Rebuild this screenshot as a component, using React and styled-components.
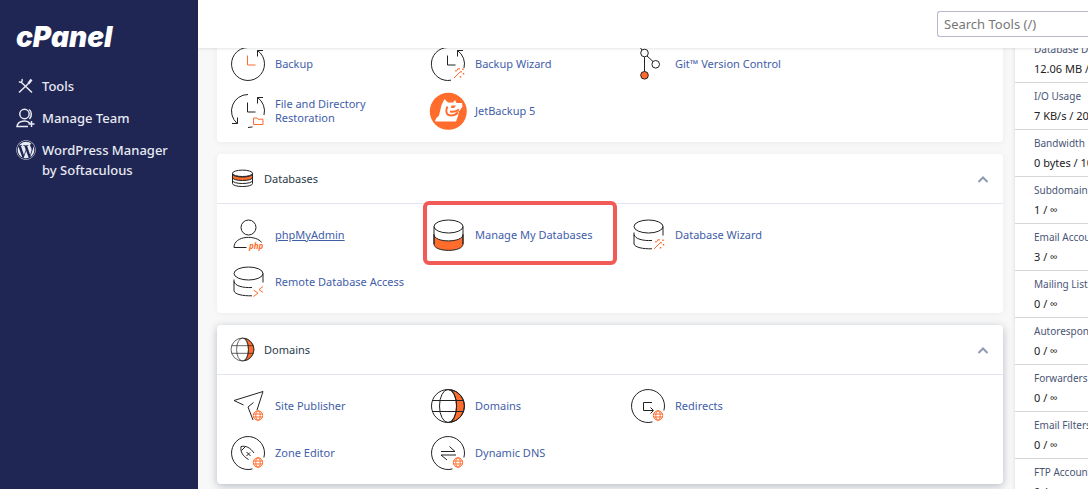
import React from 'react';
import styled, { createGlobalStyle, css } from 'styled-components';
import { FaWordpress } from 'react-icons/fa';

const ORANGE = '#ff6c2c';
const INK = '#222';

const GlobalStyle = createGlobalStyle`
  *, *::before, *::after { box-sizing: border-box; }
  body {
    margin: 0;
    background: #f8f8f8;
    color: #293a4a;
    font-family: "Noto Sans", "Open Sans", sans-serif;
    font-size: 11px;
  }
`;

const Shell = styled.div`
  display: flex;
  height: 100vh;
  overflow: hidden;
`;

const Sidebar = styled.aside`
  flex: 0 0 198px;
  padding: 20px 16px;
  background: #1f2654;
  color: #e8eaf2;
`;

const Logo = styled.a`
  display: block;
  margin-bottom: 22px;
  color: #fff;
  font: italic 900 28px/34px Inter, sans-serif;
  text-decoration: none;
`;

const Nav = styled.nav`
  display: flex;
  flex-direction: column;
  gap: 12px;
`;

const NavLink = styled.a`
  display: flex;
  align-items: flex-start;
  gap: 6px;
  color: inherit;
  font: 500 13px/20px "Noto Sans", sans-serif;
  text-decoration: none;

  svg { flex: none; width: 20px; height: 20px; }
`;

const Page = styled.div`
  flex: 1;
  min-width: 0;
  display: flex;
  flex-direction: column;
`;

const TopBar = styled.header`
  position: relative;
  z-index: 1;
  flex: 0 0 48px;
  display: flex;
  align-items: center;
  justify-content: flex-end;
  background: #fff;
  box-shadow: 0 1px 3px rgba(0, 0, 0, 0.1);
`;

const Search = styled.input`
  width: 151px;
  height: 26px;
  padding: 0 6px;
  border: 1px solid #b5b9cb;
  border-right: 0;
  border-radius: 3px 0 0 3px;
  background: #fff;
  color: #333;
  font: 13px "Noto Sans", sans-serif;

  &::placeholder { color: #777; opacity: 1; }
`;

const Scroller = styled.div`
  flex: 1;
  min-height: 0;
  overflow: hidden;
`;

const Columns = styled.div`
  display: grid;
  grid-template-columns: minmax(0, 1fr) 73px;
  gap: 12px;
  margin-top: -15px;
  padding-left: 19px;
`;

const Panels = styled.main`
  display: flex;
  flex-direction: column;
  gap: 12px;
`;

const PanelBox = styled.section`
  border-radius: 4px;
  background: #fff;
  box-shadow: ${(p) => (p.$raised
    ? '0 2px 8px rgba(31, 45, 75, 0.3)'
    : '0 1px 6px rgba(31, 45, 75, 0.06)')};
`;

const PanelHeader = styled.header`
  display: flex;
  align-items: center;
  gap: 9px;
  height: 50px;
  padding: 0 13px;
  border-bottom: 1px solid #e3e5ee;

  > svg { flex: none; width: 25px; height: 25px; }
`;

const PanelTitle = styled.h2`
  flex: 1;
  margin: 0;
  font-size: 11px;
  font-weight: 400;
`;

const Collapse = styled.button`
  display: flex;
  padding: 0;
  border: 0;
  background: none;
  color: #8f9bb3;
`;

const Tools = styled.div`
  display: grid;
  grid-template-columns: repeat(auto-fill, 200px);
  gap: 11px 0;
  padding: 13px;
`;

const Tool = styled.a`
  position: relative;
  display: flex;
  align-items: center;
  gap: 9px;
  height: 36px;
  color: #3f5ea8;
  line-height: 14px;
  text-decoration: ${(p) => (p.$underlined ? 'underline' : 'none')};

  svg { flex: none; width: 36px; height: 36px; overflow: visible; }
  span { max-width: 140px; }

  ${(p) => p.$marked && css`
    &::after {
      content: "";
      position: absolute;
      inset: -16px 13px -12px -7px;
      border: 4px solid #f15b57;
      border-radius: 6px;
    }
  `}
`;

const Stats = styled.dl`
  margin: 0;
  padding-top: 3px;
  background: #fff;
  box-shadow: 0 0 4px rgba(31, 45, 75, 0.15);
  overflow: hidden;
  white-space: nowrap;
`;

const Stat = styled.div`
  height: 47px;
  padding: 3px 0 0 19px;
  border-bottom: 1px solid #d5d6d9;
`;

const StatName = styled.dt`
  color: #4a5575;
  font-size: 10px;
  line-height: 20px;
`;

const StatValue = styled.dd`
  margin: 0;
  color: #222;
  line-height: 20px;
`;

function Icon({ size = 36, children }) {
  return (
    <svg viewBox={`0 0 ${size} ${size}`} fill="none" stroke={INK} strokeWidth="1" aria-hidden="true">
      {children}
    </svg>
  );
}

const Wand = () => (
  <g stroke={ORANGE}>
    <path d="M24 32l6-6" />
    <path d="M26 24v1.500M29 22v1.500M33 22.500v1.500M31 25v1.500M33.500 27v1.500M30.500 30v1.500M27 23.500h1" strokeWidth="1.500" />
  </g>
);

const MiniGlobe = () => (
  <g stroke={ORANGE}>
    <circle cx="28" cy="27.500" r="4.700" fill="#fff" />
    <ellipse cx="28" cy="27.500" rx="2.200" ry="4.700" />
    <path d="M23.500 26h9M23.500 29h9" />
  </g>
);

const Globe = () => (
  <Icon>
    <path d="M21 1.800A16.500 16.500 0 0 1 21 34.200C28.500 28 28.500 8 21 1.800z" fill={ORANGE} />
    <circle cx="18" cy="18" r="16.500" />
    <ellipse cx="18" cy="18" rx="8.500" ry="16.500" />
    <path d="M2.500 12.500h31M2.500 23.500h31" />
  </Icon>
);

const OpenRing = () => <path d="M33.900 22.500A16.500 16.500 0 1 0 22.500 33.900" />;

const icons = {
  backup: (
    <Icon>
      <path d="M18 1.500A16.500 16.500 0 1 0 27.500 4.500M33 4.500h-5.500v6" />
      <path d="M17.500 9.500v9.500h8" stroke={ORANGE} />
    </Icon>
  ),
  backupWizard: (
    <Icon>
      <path d="M18 1.500A16.500 16.500 0 1 0 21 34.200M34 22A16.500 16.500 0 0 0 27.500 4.500M33 4.500h-5.500v6M17.500 9.500v9.500h8" />
      <Wand />
    </Icon>
  ),
  git: (
    <Icon>
      <path d="M9 0l3 4M17 10l6 5.500M14.500 11v14.500" />
      <circle cx="14.500" cy="7" r="3.800" />
      <circle cx="25.700" cy="18.300" r="3.800" />
      <circle cx="14.500" cy="29.300" r="3.800" fill={ORANGE} />
    </Icon>
  ),
  restore: (
    <Icon>
      <path d="M18 1.500A16.500 16.500 0 0 0 7 30.300M2 30.500h5.500v-6M18 34.500l4.500-.6M34 22A16.500 16.500 0 0 0 27.500 4.500M33 4.500h-5.500v6M17.500 9.500v9.500h8" />
      <path d="M23.500 25h3.500l1 1.200h5v5.300h-9.500z" stroke={ORANGE} />
    </Icon>
  ),
  jetbackup: (
    <Icon>
      <circle cx="18.300" cy="18.300" r="18.500" fill={ORANGE} stroke="none" />
      <path d="M11.500 12L14.500 6l3.500 3.500h5L25 7l1.500 3H32l.5 3.500-3 4.500-5.500 1.500 5-.5-1 4-2 5.500H5l1-3 3-3z" fill="#fff" stroke="none" />
      <path d="M21.500 12.500h4.500l-2 2.500h-3z" fill={ORANGE} stroke="none" />
      <path d="M17.500 13.500c-2.500 5-1 9 3.500 9 2.500 0 5-1 7-3M20 18.500c4 .8 7-.5 9-2" stroke={ORANGE} strokeWidth="1.800" />
    </Icon>
  ),
  databasesGroup: (
    <Icon size={25}>
      <path d="M2.500 8v3.500c0 4 20 4 20 0V8c0 4-20 4-20 0z" fill={ORANGE} />
      <ellipse cx="12.500" cy="7.300" rx="10" ry="3.200" />
      <path d="M2.500 7.500v10c0 4 20 4 20 0v-10M2.500 14.500c0 4 20 4 20 0" />
    </Icon>
  ),
  php: (
    <Icon>
      <circle cx="18.500" cy="10.500" r="7.500" />
      <path d="M16.500 30.500H4C4 18 27 18 31.500 25.500" />
      <text x="19" y="31.500" fill={ORANGE} stroke="none" fontFamily="Open Sans, sans-serif" fontSize="8" fontWeight="700" fontStyle="italic">php</text>
    </Icon>
  ),
  database: (
    <Icon>
      <path d="M4 17.500v9.500c0 8.500 29 8.500 29 0v-9.500c0 8.500-29 8.500-29 0z" fill={ORANGE} />
      <ellipse cx="18.500" cy="9.500" rx="14.500" ry="6.500" />
      <path d="M4 9.500V27M33 9.500V27" />
    </Icon>
  ),
  databaseWizard: (
    <Icon>
      <ellipse cx="18.500" cy="9.500" rx="14.500" ry="6.500" />
      <path d="M33 9.500v9M4 15.500V27c1 3.500 9 5 18 4.800M4 17.500c1 4.500 9 6.500 18 6" />
      <Wand />
    </Icon>
  ),
  remoteDatabase: (
    <Icon>
      <ellipse cx="18.500" cy="9.500" rx="14.500" ry="6.500" />
      <path d="M33 9.500v9M4 15.500V27c1 3.500 9 5 18 4.800M4 17.500c1 4.500 9 6.500 18 6" />
      <path d="M23.500 26l4.500 3.200-4.500 3.300M33 22.500l-4 3 4 3" stroke={ORANGE} />
    </Icon>
  ),
  globe: <Globe />,
  publisher: (
    <Icon>
      <path d="M13.500 17L4 12.500 33 3.500 27 22M23.500 14.500L18 19l5 13" />
      <MiniGlobe />
    </Icon>
  ),
  redirects: (
    <Icon>
      <OpenRing />
      <path d="M22 14.500H13.500v8H23M20.500 19.500l3 3-3 3" />
      <MiniGlobe />
    </Icon>
  ),
  zone: (
    <Icon>
      <OpenRing />
      <path d="M11 11.500c5-1 9 1 13 6.500M11 11.500c-.8 5 1.500 9.500 7.500 13M11.500 15.500l4.500-4.500M16.500 17l4 4M20 17.500l-3.500 3.500" />
      <MiniGlobe />
    </Icon>
  ),
  dns: (
    <Icon>
      <OpenRing />
      <path d="M11 16.500h14l-5.500-5M26 20H11l6 5" />
      <MiniGlobe />
    </Icon>
  ),
};

const groups = [
  {
    tools: [
      { icon: 'backup', label: 'Backup' },
      { icon: 'backupWizard', label: 'Backup Wizard' },
      { icon: 'git', label: 'Git™ Version Control' },
      { icon: 'restore', label: 'File and Directory Restoration' },
      { icon: 'jetbackup', label: 'JetBackup 5' },
    ],
  },
  {
    title: 'Databases',
    icon: 'databasesGroup',
    tools: [
      { icon: 'php', label: 'phpMyAdmin', underlined: true },
      { icon: 'database', label: 'Manage My Databases', marked: true },
      { icon: 'databaseWizard', label: 'Database Wizard' },
      { icon: 'remoteDatabase', label: 'Remote Database Access' },
    ],
  },
  {
    title: 'Domains',
    icon: 'globe',
    raised: true,
    tools: [
      { icon: 'publisher', label: 'Site Publisher' },
      { icon: 'globe', label: 'Domains' },
      { icon: 'redirects', label: 'Redirects' },
      { icon: 'zone', label: 'Zone Editor' },
      { icon: 'dns', label: 'Dynamic DNS' },
    ],
  },
];

const stats = [
  ['Database Disk Usage', '12.06 MB / ∞'],
  ['I/O Usage', '7 KB/s / 20 MB/s'],
  ['Bandwidth', '0 bytes / 100 GB'],
  ['Subdomains', '1 / ∞'],
  ['Email Accounts', '3 / ∞'],
  ['Mailing Lists', '0 / ∞'],
  ['Autoresponders', '0 / ∞'],
  ['Forwarders', '0 / ∞'],
  ['Email Filters', '0 / ∞'],
  ['FTP Accounts', '0 / ∞'],
];

function Panel({ group }) {
  return (
    <PanelBox $raised={group.raised}>
      {group.title && (
        <PanelHeader>
          {icons[group.icon]}
          <PanelTitle>{group.title}</PanelTitle>
          <Collapse type="button" aria-label={`Collapse ${group.title}`}>
            <svg width="14" height="14" viewBox="0 0 14 14" fill="none" stroke="currentColor" strokeWidth="2">
              <path d="M2.500 10L7 5.500 11.500 10" />
            </svg>
          </Collapse>
        </PanelHeader>
      )}
      <Tools>
        {group.tools.map((tool) => (
          <Tool key={tool.label} href="#" $underlined={tool.underlined} $marked={tool.marked}>
            {icons[tool.icon]}
            <span>{tool.label}</span>
          </Tool>
        ))}
      </Tools>
    </PanelBox>
  );
}

export default function App() {
  return (
    <Shell>
      <GlobalStyle />
      <Sidebar>
        <Logo href="#">cPanel</Logo>
        <Nav>
          <NavLink href="#">
            <svg viewBox="0 0 20 20" fill="none" stroke="currentColor" strokeWidth="1.500" aria-hidden="true">
              <path d="M5.500 6.500L16 16.500M3 5.500c1.500 1.500 4 .5 3-2.500M3 16.500L13 7" />
              <path d="M12.500 7.500l3-4" strokeWidth="2.500" />
            </svg>
            Tools
          </NavLink>
          <NavLink href="#">
            <svg viewBox="0 0 20 20" fill="none" stroke="currentColor" strokeWidth="1.500" aria-hidden="true">
              <circle cx="8.500" cy="6" r="4.700" />
              <path d="M13 1.500c3 2 3 7 .5 9.500M12 18.500H1c.5-6 10-7 13-3M15.500 13v6M12.500 16h6" />
            </svg>
            Manage Team
          </NavLink>
          <NavLink href="#">
            <FaWordpress aria-hidden="true" />
            <span>WordPress Manager by Softaculous</span>
          </NavLink>
        </Nav>
      </Sidebar>
      <Page>
        <TopBar>
          <Search type="search" aria-label="Search tools" placeholder="Search Tools (/)" />
        </TopBar>
        <Scroller>
          <Columns>
            <Panels>
              {groups.map((group) => (
                <Panel key={group.title || 'Files'} group={group} />
              ))}
            </Panels>
            <Stats>
              {stats.map(([name, value]) => (
                <Stat key={name}>
                  <StatName>{name}</StatName>
                  <StatValue>{value}</StatValue>
                </Stat>
              ))}
            </Stats>
          </Columns>
        </Scroller>
      </Page>
    </Shell>
  );
}
